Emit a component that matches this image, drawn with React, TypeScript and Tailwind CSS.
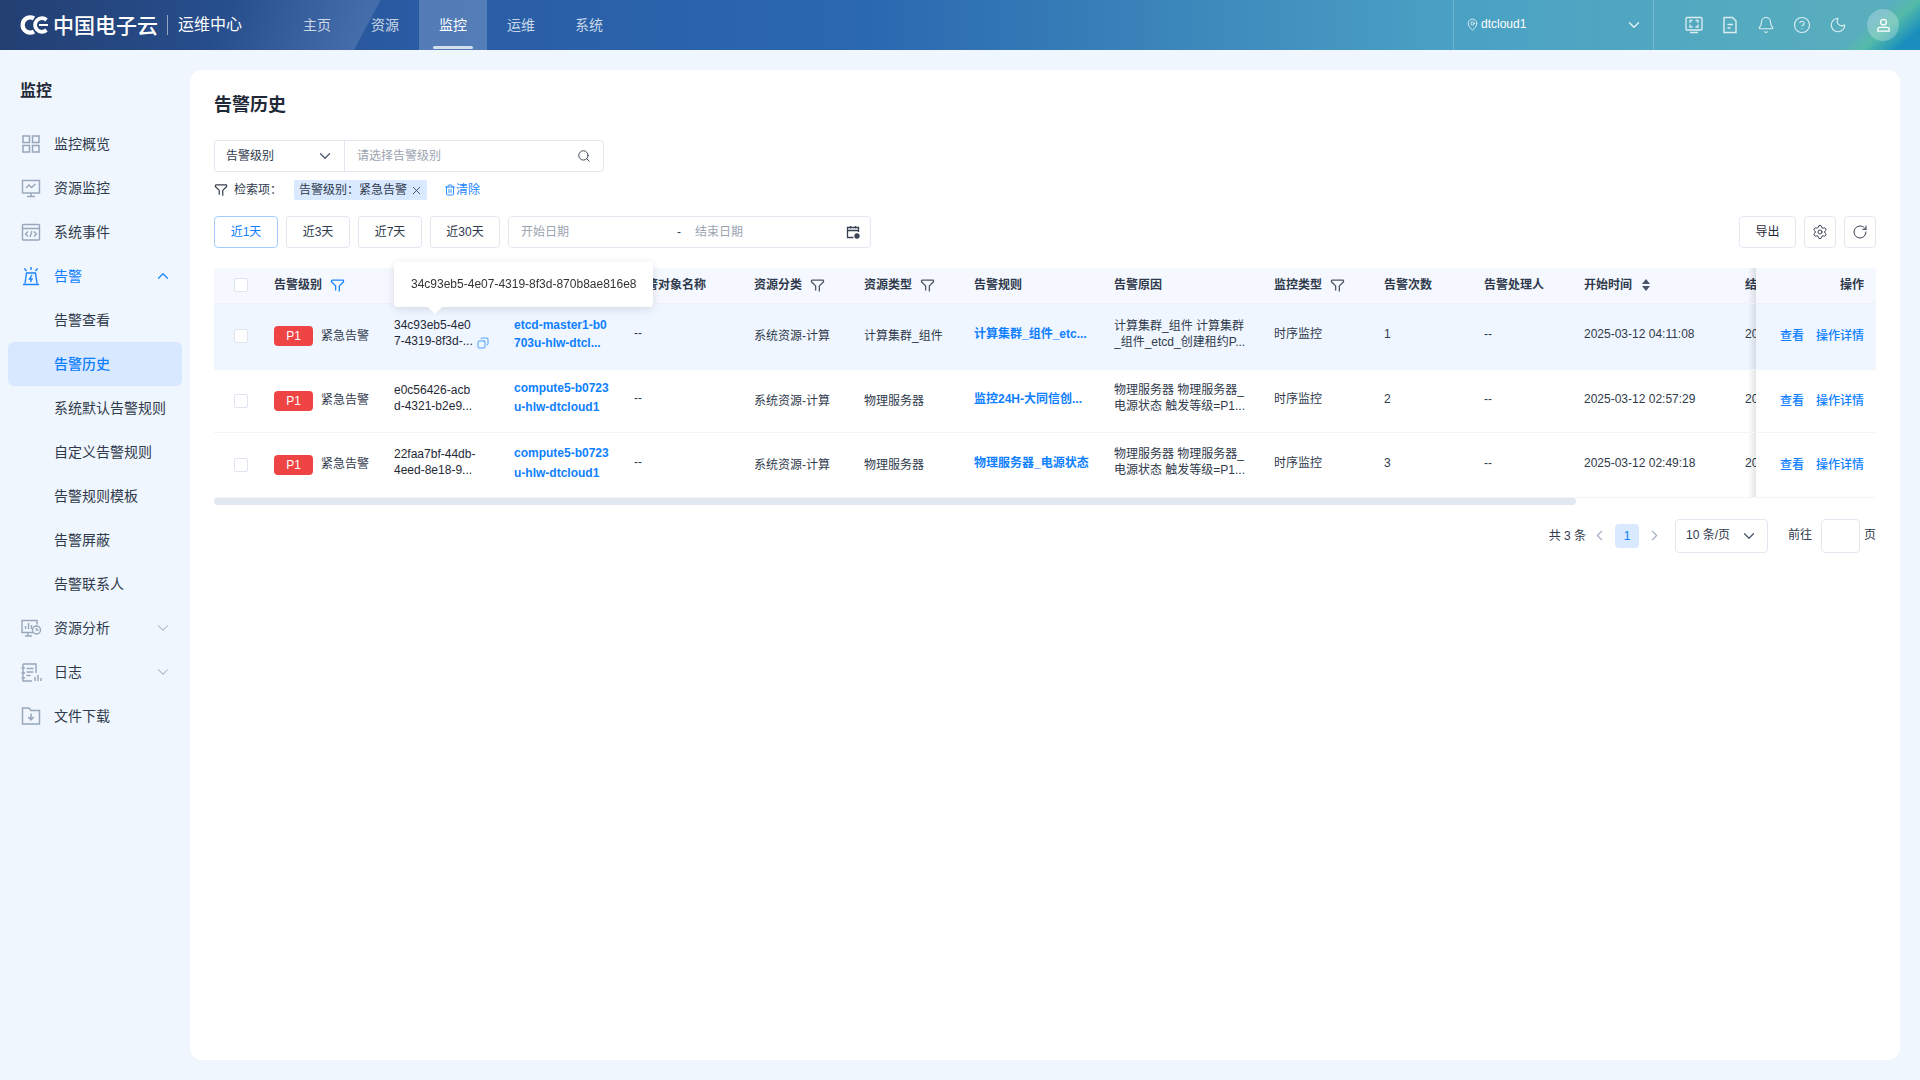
import React from "react";
import { ChevronDown, ChevronUp, ChevronLeft, ChevronRight, Search, X, Trash2, Settings, RotateCw, Bell, CircleHelp, Moon, MapPin, Copy } from "lucide-react";

const Funnel = ({ className }: { className: string }) => (
  <svg viewBox="0 0 16 16" fill="none" stroke="currentColor" strokeWidth="1.4" strokeLinejoin="round" className={className}>
    <path d="M1.8 2.2h12.4l.3 1.8L10 8.4V14.5M1.8 2.2l-.3 1.8L6 8.4v5" />
  </svg>
);

const iconCls = "w-[22px] h-[22px] text-[#97a6ba] shrink-0";
const SideIcons: Record<string, React.ReactNode> = {
  grid: (
    <svg viewBox="0 0 22 22" fill="none" stroke="currentColor" strokeWidth="1.5" className={iconCls}>
      <rect x="3" y="3" width="6.5" height="6.5" /><rect x="12.5" y="3" width="6.5" height="6.5" />
      <rect x="3" y="12.5" width="6.5" height="6.5" /><rect x="12.5" y="12.5" width="6.5" height="6.5" />
    </svg>
  ),
  monitor: (
    <svg viewBox="0 0 22 22" fill="none" stroke="currentColor" strokeWidth="1.4" className={iconCls}>
      <rect x="2.5" y="3.5" width="17" height="12.5" /><path d="M6 11l3-3 2.5 2.5L15.5 7M11 16v3M7 19.5h8" />
    </svg>
  ),
  code: (
    <svg viewBox="0 0 22 22" fill="none" stroke="currentColor" strokeWidth="1.4" className={iconCls}>
      <rect x="2.5" y="3.5" width="17" height="15.5" rx="1" /><path d="M2.5 7.5h17M8 10.5l-2.5 2.5L8 15.5M14 10.5l2.5 2.5L14 15.5M12 10l-2 6" />
    </svg>
  ),
  siren: (
    <svg viewBox="0 0 22 22" fill="none" stroke="currentColor" strokeWidth="1.4" className="w-[22px] h-[22px] text-[#1a85ff] shrink-0">
      <path d="M5 18.5l1.5-10.5h9l1.5 10.5M3 19.5h16M12 10l-2.5 4H12l-1.5 3M11 2v3M4.5 3.5l2 2.5M17.5 3.5l-2 2.5" />
    </svg>
  ),
  analysis: (
    <svg viewBox="0 0 22 22" fill="none" stroke="currentColor" strokeWidth="1.4" className={iconCls}>
      <path d="M13 15.5H2V3.5h15v4M8 15.5v3M5 19h7M5.5 12V9M8.5 12V6M11.5 12V8" /><circle cx="16.5" cy="13" r="4" /><path d="M16.5 11v2h2" />
    </svg>
  ),
  log: (
    <svg viewBox="0 0 22 22" fill="none" stroke="currentColor" strokeWidth="1.4" className={iconCls}>
      <path d="M3 3h13v9M3 3v17h9M1.5 7H5M1.5 12H5M1.5 17H5M6.5 7.5h7M6.5 11h7M6.5 14.5h4M15 20v-4M18 20v-6M21 20v-3" />
    </svg>
  ),
  folder: (
    <svg viewBox="0 0 22 22" fill="none" stroke="currentColor" strokeWidth="1.5" className={iconCls}>
      <path d="M2.5 3h6.5l2 2.5h8.5V19h-17zM11 8.5v6M8.3 12l2.7 2.8 2.7-2.8" />
    </svg>
  ),
};

const SideRow = ({ icon, label, right, blue }: { icon: string; label: string; right?: React.ReactNode; blue?: boolean }) => (
  <div className="h-[44px] flex items-center pl-[20px] pr-[18px] gap-[12px]">
    {SideIcons[icon]}
    <span className={blue ? "text-[#0f7fff] text-[14px]" : "text-[#2f3a4c] text-[14px]"}>{label}</span>
    <span className="ml-auto">{right}</span>
  </div>
);

const SubRow = ({ label, active }: { label: string; active?: boolean }) => (
  <div className={active ? "h-[44px] mx-[8px] rounded-[6px] bg-[#d8e8ff] flex items-center pl-[46px] text-[14px] text-[#0f7fff] font-medium" : "h-[44px] flex items-center pl-[54px] text-[14px] text-[#2f3a4c]"}>
    {label}
  </div>
);

const Btn = ({ children, active, cls }: { children: React.ReactNode; active?: boolean; cls: string }) => (
  <div className={(active ? "border-[#a8ccff] text-[#0f7fff] " : "border-[#e2e8f0] text-[#2f3a4c] ") + "h-[32px] border rounded-[4px] flex items-center justify-center text-[12px] bg-white " + cls}>
    {children}
  </div>
);

const Th = ({ children, filter, blue }: { children: React.ReactNode; filter?: boolean; blue?: boolean }) => (
  <th className="h-[35px] p-0 text-left font-bold text-[12px] text-[#2f3a4c] border-b border-[#eef2f7] whitespace-nowrap overflow-hidden">
    <div className="flex items-center">
      <span>{children}</span>
      {filter && <Funnel className={blue ? "w-[15px] h-[15px] ml-[8px] text-[#1a85ff]" : "w-[15px] h-[15px] ml-[8px] text-[#4b5563]"} />}
    </div>
  </th>
);

type Row = {
  h: string; id: [string, string]; obj: [string, string]; objPad: string; type: string; rule: string; reason: [string, string]; n: string; time: string; bg: string; copy?: boolean;
};
const rows: Row[] = [
  { h: "h-[66px]", id: ["34c93eb5-4e0", "7-4319-8f3d-..."], obj: ["etcd-master1-b0", "703u-hlw-dtcl..."], objPad: "pb-[4px] leading-[18px]", type: "计算集群_组件", rule: "计算集群_组件_etc...", reason: ["计算集群_组件 计算集群", "_组件_etcd_创建租约P..."], n: "1", time: "2025-03-12 04:11:08", bg: "bg-[#eff6ff]", copy: true },
  { h: "h-[63px]", id: ["e0c56426-acb", "d-4321-b2e9..."], obj: ["compute5-b0723", "u-hlw-dtcloud1"], objPad: "pb-[5px] leading-[19px]", type: "物理服务器", rule: "监控24H-大同信创...", reason: ["物理服务器 物理服务器_", "电源状态 触发等级=P1..."], n: "2", time: "2025-03-12 02:57:29", bg: "bg-white" },
  { h: "h-[65px]", id: ["22faa7bf-44db-", "4eed-8e18-9..."], obj: ["compute5-b0723", "u-hlw-dtcloud1"], objPad: "pb-[4px] leading-[20px]", type: "物理服务器", rule: "物理服务器_电源状态", reason: ["物理服务器 物理服务器_", "电源状态 触发等级=P1..."], n: "3", time: "2025-03-12 02:49:18", bg: "bg-white" },
];

const Shadow = () => (
  <span className="absolute top-0 bottom-0 right-full w-[8px] bg-gradient-to-l from-black/10 to-transparent" />
);

export default function App() {
  const cell = "p-0 border-b border-[#f1f4f8] text-[12px] text-[#2f3a4c] whitespace-nowrap overflow-hidden";
  return (
    <div className="w-[1920px] h-[1080px] overflow-hidden flex flex-col bg-[#eff6fe] font-['Liberation_Sans','Noto_Sans_CJK_SC',sans-serif]">
      {/* top bar */}
      <header className="h-[50px] shrink-0 flex items-stretch text-white bg-[linear-gradient(139deg,transparent_95.9%,#55bba8_97%,#1a8fbd_98.8%),linear-gradient(118deg,transparent_12%,rgba(255,255,255,0.13)_19.5%,transparent_19.6%),linear-gradient(90deg,#233f72_0%,#2a5ca5_22%,#2a68b0_45%,#4aa0c4_75%,#5ab0bc_100%)]">
        <div className="w-[283px] shrink-0 flex items-center pl-[20px]">
          <svg viewBox="0 0 29 20" className="w-[29px] h-[20px] shrink-0" fill="none" stroke="white">
            <path d="M14 3.4A7.6 7.6 0 1 0 14 16.6" strokeWidth="4.2" />
            <path d="M26.5 5A6.8 6.8 0 1 0 26.5 15" strokeWidth="3.8" />
            <path d="M19 10h9" strokeWidth="2" />
          </svg>
          <span className="ml-[4px] text-[21px] leading-none font-medium whitespace-nowrap">中国电子云</span>
          <span className="w-px h-[20px] bg-white/50 ml-[9px] mr-[10px]" />
          <span className="text-[16px] whitespace-nowrap">运维中心</span>
        </div>
        <nav className="flex items-stretch text-[14px]">
          {["主页", "资源", "监控", "运维", "系统"].map((t) => (
            <div key={t} className={t === "监控" ? "relative w-[68px] flex items-center justify-center bg-white/20 text-white" : "w-[68px] flex items-center justify-center text-white/75"}>
              {t}
              {t === "监控" && <span className="absolute bottom-[1px] left-[14px] w-[40px] h-[3px] rounded-full bg-white/75" />}
            </div>
          ))}
        </nav>
        <div className="ml-auto w-[200px] shrink-0 border-l border-white/20 flex items-center pl-[12px] pr-[10px] text-[12px] font-medium">
          <MapPin className="w-[13px] h-[13px] text-white/90 mb-[1px]" strokeWidth={1.6} />
          <span className="ml-[2px] mb-[3px] text-white">dtcloud1</span>
          <ChevronDown className="ml-auto w-[18px] h-[18px] text-white/90" strokeWidth={1.6} />
        </div>
        <div className="w-[267px] shrink-0 border-l border-white/20 flex items-center pl-[31px] text-white/80">
          <div className="flex items-center gap-[18px]">
            <svg viewBox="0 0 18 18" fill="none" stroke="currentColor" strokeWidth="1.3" className="w-[18px] h-[18px]">
              <rect x="1" y="1.5" width="16" height="12.5" rx="1" /><path d="M5 7V4.5h2.5M10.5 4.5H13V7M13 8.5V11h-2.5M7.5 11H5V8.5M5 16.5h8" />
            </svg>
            <svg viewBox="0 0 18 18" fill="none" stroke="currentColor" strokeWidth="1.4" className="w-[18px] h-[18px]">
              <path d="M3 1.5h8.5L15 5v11.5H3zM6.5 8.5h5.5M6.5 12h3" />
            </svg>
            <Bell className="w-[18px] h-[18px]" strokeWidth={1.5} />
            <CircleHelp className="w-[18px] h-[18px]" strokeWidth={1.5} />
            <Moon className="w-[18px] h-[18px]" strokeWidth={1.5} />
          </div>
          <div className="ml-[20px] w-[32px] h-[32px] rounded-full bg-white/25 flex items-center justify-center">
            <svg viewBox="0 0 16 16" fill="none" stroke="white" strokeWidth="1.4" className="w-[15px] h-[15px]">
              <circle cx="8" cy="4.5" r="3" /><path d="M2 14v-2.5c0-1 1-1.5 2-1.5h8c1 0 2 .5 2 1.5V14z" />
            </svg>
          </div>
        </div>
      </header>

      <div className="flex-1 flex min-h-0">
        {/* side menu */}
        <aside className="w-[190px] shrink-0">
          <div className="h-[72px] flex items-center pl-[20px] pt-[9px] text-[16px] font-bold text-[#1f2937]">监控</div>
          <SideRow icon="grid" label="监控概览" />
          <SideRow icon="monitor" label="资源监控" />
          <SideRow icon="code" label="系统事件" />
          <SideRow icon="siren" label="告警" blue right={<ChevronUp className="w-[18px] h-[18px] text-[#1a85ff]" strokeWidth={1.6} />} />
          <SubRow label="告警查看" />
          <SubRow label="告警历史" active />
          <SubRow label="系统默认告警规则" />
          <SubRow label="自定义告警规则" />
          <SubRow label="告警规则模板" />
          <SubRow label="告警屏蔽" />
          <SubRow label="告警联系人" />
          <SideRow icon="analysis" label="资源分析" right={<ChevronDown className="w-[18px] h-[18px] text-[#a3b0c2]" strokeWidth={1.4} />} />
          <SideRow icon="log" label="日志" right={<ChevronDown className="w-[18px] h-[18px] text-[#a3b0c2]" strokeWidth={1.4} />} />
          <SideRow icon="folder" label="文件下载" />
        </aside>

        {/* content */}
        <main className="flex-1 min-w-0 pt-[20px] pr-[20px] pb-[20px]">
          <div className="h-full bg-white rounded-[12px] px-[24px] pt-[20px]">
            <h1 className="h-[30px] leading-[30px] text-[18px] font-bold text-[#1f2937]">告警历史</h1>

            <div className="mt-[20px] w-[390px] h-[32px] border border-[#e2e8f0] rounded-[4px] flex items-stretch text-[12px]">
              <div className="w-[130px] shrink-0 border-r border-[#e2e8f0] flex items-center pl-[11px] pr-[10px] text-[#2f3a4c]">
                告警级别
                <ChevronDown className="ml-auto w-[18px] h-[18px] text-[#475569]" strokeWidth={1.6} />
              </div>
              <div className="flex-1 flex items-center pl-[12px] pr-[12px] text-[#9ca3af]">
                请选择告警级别
                <Search className="ml-auto w-[14px] h-[14px] text-[#374151]" strokeWidth={1.6} />
              </div>
            </div>

            <div className="mt-[8px] h-[20px] flex items-center text-[12px] text-[#2f3a4c]">
              <Funnel className="w-[14px] h-[14px] text-[#374151]" />
              <span className="ml-[6px]">检索项：</span>
              <span className="ml-[12px] h-[20px] w-[133px] rounded-[2px] bg-[#d9e9ff] flex items-center pl-[5px]">
                告警级别：紧急告警
                <X className="ml-auto mr-[4px] w-[13px] h-[13px] text-[#374151]" strokeWidth={1.6} />
              </span>
              <Trash2 className="ml-[17px] w-[12px] h-[12px] text-[#1a85ff]" strokeWidth={1.8} />
              <span className="text-[#1a85ff]">清除</span>
            </div>

            <div className="mt-[16px] flex items-center">
              <div className="flex gap-[8px]">
                <Btn active cls="w-[64px]">近1天</Btn>
                <Btn cls="w-[64px]">近3天</Btn>
                <Btn cls="w-[64px]">近7天</Btn>
                <Btn cls="w-[70px]">近30天</Btn>
              </div>
              <div className="ml-[8px] w-[363px] h-[32px] border border-[#e2e8f0] rounded-[4px] flex items-center text-[12px] text-[#9ca3af] pl-[12px] pr-[10px]">
                <span className="w-[156px]">开始日期</span>
                <span className="w-[18px] text-[#374151]">-</span>
                <span>结束日期</span>
                <svg viewBox="0 0 14 14" fill="none" stroke="#374151" strokeWidth="1.3" className="ml-auto w-[14px] h-[14px]">
                  <path d="M12.5 7V2.5h-11v10h6M1.5 5.5h11M4.5 1v2.5M9.5 1v2.5" /><circle cx="11" cy="11" r="2" fill="#374151" />
                </svg>
              </div>
              <div className="ml-auto flex gap-[8px]">
                <Btn cls="w-[57px] !text-[#1f2937]">导出</Btn>
                <Btn cls="w-[32px]"><Settings className="w-[16px] h-[16px] text-[#374151]" strokeWidth={1.5} /></Btn>
                <Btn cls="w-[32px]"><RotateCw className="w-[16px] h-[16px] text-[#374151]" strokeWidth={1.5} /></Btn>
              </div>
            </div>

            {/* table */}
            <div className="relative mt-[20px]">
              <div className="overflow-hidden rounded-t-[4px]">
                <table className="table-fixed border-collapse w-[1811px]">
                  <colgroup>
                    <col className="w-[60px]" /><col className="w-[120px]" /><col className="w-[120px]" /><col className="w-[120px]" /><col className="w-[120px]" />
                    <col className="w-[110px]" /><col className="w-[110px]" /><col className="w-[140px]" /><col className="w-[160px]" /><col className="w-[110px]" />
                    <col className="w-[100px]" /><col className="w-[100px]" /><col className="w-[161px]" /><col className="w-[160px]" /><col className="w-[120px]" />
                  </colgroup>
                  <thead className="bg-[#f5f8ff]">
                    <tr>
                      <th className="h-[35px] p-0 border-b border-[#eef2f7]"><span className="block ml-[20px] w-[14px] h-[14px] bg-white border border-[#dfe5ee] rounded-[2px]" /></th>
                      <Th filter blue>告警级别</Th>
                      <Th>告警ID</Th>
                      <Th>告警对象</Th>
                      <Th>告警对象名称</Th>
                      <Th filter>资源分类</Th>
                      <Th filter>资源类型</Th>
                      <Th>告警规则</Th>
                      <Th>告警原因</Th>
                      <Th filter>监控类型</Th>
                      <Th>告警次数</Th>
                      <Th>告警处理人</Th>
                      <th className="h-[35px] p-0 text-left font-bold text-[12px] text-[#2f3a4c] border-b border-[#eef2f7] whitespace-nowrap">
                        <div className="flex items-center">
                          开始时间
                          <svg viewBox="0 0 8 12" className="ml-[10px] w-[8px] h-[12px]" fill="#475569"><path d="M4 0l4 5H0zM4 12L0 7h8z" /></svg>
                        </div>
                      </th>
                      <Th>结束时间</Th>
                      <th className="sticky right-0 h-[35px] p-0 pr-[12px] text-right font-bold text-[12px] text-[#2f3a4c] bg-[#f5f8ff] border-b border-[#eef2f7]">
                        <Shadow />操作
                      </th>
                    </tr>
                  </thead>
                  <tbody>
                    {rows.map((r) => (
                      <tr key={r.n} className={r.bg}>
                        <td className={r.h + " " + cell}><span className="block ml-[20px] w-[14px] h-[14px] bg-white border border-[#dfe5ee] rounded-[2px]" /></td>
                        <td className={cell}>
                          <div className="flex items-center">
                            <span className="w-[39px] h-[20px] rounded-[4px] bg-[#ef4444] text-white text-[12px] font-medium flex items-center justify-center">P1</span>
                            <span className="ml-[8px] mb-[1px]">紧急告警</span>
                          </div>
                        </td>
                        <td className={cell}>
                          <div className="pb-[6px] leading-[16px] text-[#1f2937]">
                            <div>{r.id[0]}</div>
                            <div className="flex items-center">
                              {r.id[1]}
                              {r.copy && <Copy className="ml-[4px] mt-[3px] w-[12px] h-[12px] text-[#1a85ff] -scale-x-100" strokeWidth={1.5} />}
                            </div>
                          </div>
                        </td>
                        <td className={cell}>
                          <div className={r.objPad + " text-[#0f7fff] font-bold"}>
                            <div>{r.obj[0]}</div>
                            <div>{r.obj[1]}</div>
                          </div>
                        </td>
                        <td className={cell}><div className="pb-[6px]">--</div></td>
                        <td className={cell}>系统资源-计算</td>
                        <td className={cell}>{r.type}</td>
                        <td className={cell}><div className="pb-[4px] text-[#0f7fff] font-bold">{r.rule}</div></td>
                        <td className={cell}>
                          <div className="pb-[5px] leading-[16px]">
                            <div>{r.reason[0]}</div>
                            <div>{r.reason[1]}</div>
                          </div>
                        </td>
                        <td className={cell}><div className="pb-[4px]">时序监控</div></td>
                        <td className={cell}><div className="pb-[4px]">{r.n}</div></td>
                        <td className={cell}><div className="pb-[4px]">--</div></td>
                        <td className={cell}><div className="pb-[4px]">{r.time}</div></td>
                        <td className={cell}><div className="pb-[4px]">{r.time}</div></td>
                        <td className={"sticky right-0 p-0 pr-[12px] text-right text-[12px] whitespace-nowrap border-b border-[#f1f4f8] text-[#0f7fff] font-medium " + r.bg}>
                          <Shadow />
                          <span>查看</span><span className="ml-[12px]">操作详情</span>
                        </td>
                      </tr>
                    ))}
                  </tbody>
                </table>
              </div>
              <div className="h-[7px]">
                <div className="w-[1362px] h-[7px] rounded-full bg-[#e2e8f0]" />
              </div>

              {/* tooltip */}
              <div className="absolute left-[180px] top-[-6px] w-[259px] h-[45px] rounded-[4px] bg-white shadow-[0_2px_10px_rgba(0,0,0,0.12)] flex items-center pl-[17px] pb-[2px] text-[12px] text-[#333] whitespace-nowrap">
                34c93eb5-4e07-4319-8f3d-870b8ae816e8
                <span className="absolute left-[36px] bottom-[-5px] w-[10px] h-[10px] rotate-45 bg-white" />
              </div>
            </div>

            {/* pager */}
            <div className="mt-[14px] h-[34px] flex items-center justify-end text-[12px] text-[#2f3a4c]">
              <span>共 3 条</span>
              <ChevronLeft className="ml-[5px] w-[17px] h-[17px] text-[#a3b0c2]" strokeWidth={1.5} />
              <span className="ml-[7px] w-[24px] h-[24px] rounded-[4px] bg-[#d9e9ff] text-[#0f7fff] flex items-center justify-center">1</span>
              <ChevronRight className="ml-[7px] w-[17px] h-[17px] text-[#a3b0c2]" strokeWidth={1.5} />
              <div className="ml-[12px] w-[93px] h-[34px] border border-[#e2e8f0] rounded-[4px] flex items-center pl-[10px] pr-[9px]">
                <span className="mb-[1px]">10 条/页</span>
                <ChevronDown className="ml-auto w-[18px] h-[18px] text-[#475569]" strokeWidth={1.6} />
              </div>
              <span className="ml-[20px] mb-[1px]">前往</span>
              <span className="ml-[9px] w-[39px] h-[34px] border border-[#e2e8f0] rounded-[4px]" />
              <span className="ml-[4px] mb-[1px]">页</span>
            </div>
          </div>
        </main>
      </div>
    </div>
  );
}
